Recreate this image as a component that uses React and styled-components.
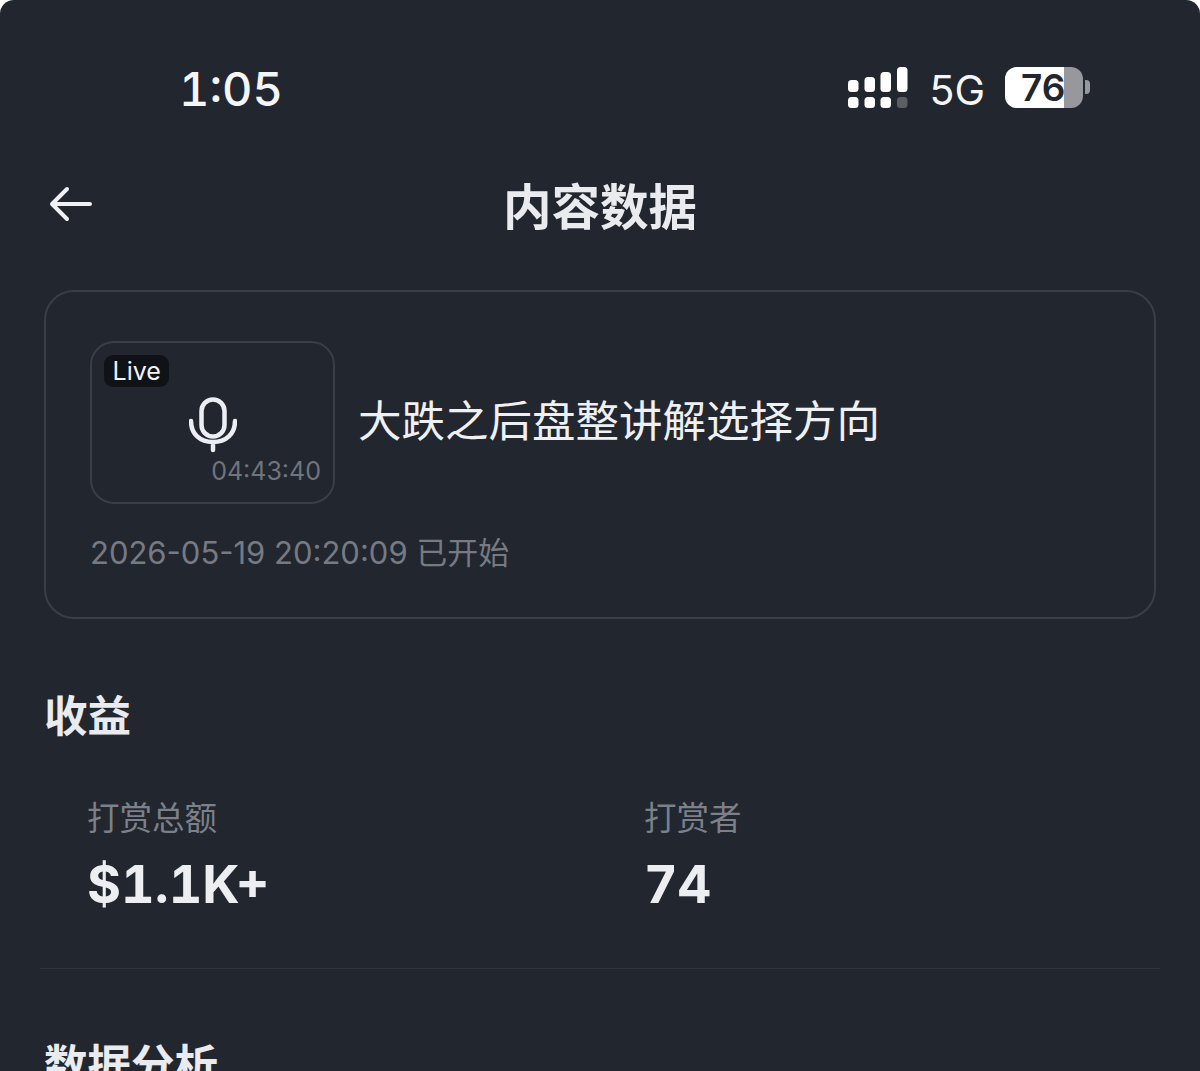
import React from "react";
import styled, { createGlobalStyle } from "styled-components";

const Global = createGlobalStyle`
  html, body { margin: 0; padding: 0; background: #ffffff; overflow: hidden; }
  * { box-sizing: border-box; }
`;

const Page = styled.div`
  width: 1200px;
  height: 1071px;
  overflow: hidden;
  background: #22262e;
  border-radius: 14px 14px 0 0;
  color: #eceef2;
  font-family: Inter, "Noto Sans CJK SC", sans-serif;
  display: flex;
  flex-direction: column;
`;

const StatusBar = styled.div`
  height: 174px;
  flex: none;
  padding: 62px 110px 0 179px;
  display: flex;
  justify-content: space-between;
  align-items: flex-start;
`;

const Clock = styled.div`
  font-size: 47px;
  line-height: 54px;
  font-weight: 500;
  font-variant-numeric: tabular-nums;
  color: #f4f5f7;
`;

const StatusIcons = styled.div`
  display: flex;
  align-items: center;
  height: 54px;
  margin-top: -2px;
`;

const Net = styled.span`
  font-size: 41px;
  line-height: 50px;
  font-weight: 400;
  margin: 5px 20px 0 21px;
  color: #f4f5f7;
`;

const Battery = styled.div`
  width: 78px;
  height: 41px;
  border-radius: 12px;
  background: #96989e;
`;

const BatteryFill = styled.div`
  height: 100%;
  background: #ffffff;
  border-radius: 12px 0 0 12px;
  color: #22262e;
  font-size: 37px;
  font-weight: 600;
  line-height: 41px;
  padding-left: 16px;
  white-space: nowrap;
`;

const BatteryCap = styled.div`
  width: 5px;
  height: 14px;
  margin-left: 2px;
  border-radius: 0 4px 4px 0;
  background: #96989e;
`;

const Header = styled.div`
  height: 60px;
  flex: none;
  position: relative;
  display: flex;
  align-items: center;
  justify-content: center;
  font-size: 48.5px;
  font-weight: 700;
  color: #e9ebef;
`;

const Back = styled.svg`
  position: absolute;
  left: 48px;
  top: 7px;
`;

const Body = styled.div`
  padding: 56px 44px 0;
  display: flex;
  flex-direction: column;
`;

const Card = styled.div`
  height: 329px;
  border: 2px solid #3a3e48;
  border-radius: 30px;
  padding: 49px 44px 0;
`;

const ItemRow = styled.div`
  display: flex;
  align-items: center;
  gap: 23px;
`;

const Thumb = styled.div`
  position: relative;
  width: 245px;
  height: 163px;
  flex: none;
  border: 2px solid #3a3e48;
  border-radius: 24px;
  display: flex;
  align-items: center;
  justify-content: center;
`;

const LiveTag = styled.span`
  position: absolute;
  left: 12px;
  top: 12px;
  height: 32px;
  padding: 0 8.5px;
  border-radius: 9px;
  background: #0f1216;
  color: #f3f4f6;
  font-size: 25px;
  line-height: 32px;
`;

const Duration = styled.span`
  position: absolute;
  right: 12px;
  bottom: 16px;
  color: #70747d;
  font-size: 25px;
  line-height: 30px;
`;

const MicIcon = styled.svg`
  margin-top: 5px;
`;

const Title = styled.div`
  font-size: 43.5px;
  line-height: 60px;
  margin-top: -4px;
  color: #eef0f3;
  white-space: nowrap;
`;

const Started = styled.div`
  margin-top: 27px;
  font-size: 31px;
  line-height: 44px;
  color: #767a83;
  white-space: nowrap;
`;

const SectionTitle = styled.h2`
  margin: ${(p) => p.$top}px 0 0;
  font-size: 43.5px;
  line-height: 60px;
  font-weight: 700;
  color: #e9ebef;
`;

const Stats = styled.div`
  display: grid;
  grid-template-columns: 557px 1fr;
  margin-top: 51px;
  padding-left: 43px;
`;

const Stat = styled.div`
  display: flex;
  flex-direction: column;
`;

const StatLabel = styled.div`
  font-size: 32.5px;
  line-height: 44px;
  color: #7c808a;
`;

const StatValue = styled.div`
  margin-top: 10px;
  font-size: 52px;
  line-height: 68px;
  font-weight: 700;
  font-variant-numeric: tabular-nums;
  color: #eceef2;
`;

const Divider = styled.div`
  height: 1px;
  margin: 49px -4px 0;
  background: #31353e;
`;

const Signal = () => (
  <svg width="60" height="41" viewBox="0 0 60 41">
    <g fill="#fff">
      <rect x="0" y="13" width="10.5" height="12" rx="3.5" />
      <rect x="16.5" y="10" width="10.5" height="15" rx="3.5" />
      <rect x="32.5" y="5" width="10.5" height="20" rx="3.5" />
      <rect x="49" y="0" width="10.5" height="25" rx="3.5" />
      <rect x="0" y="30" width="10.5" height="11" rx="3.5" />
      <rect x="16.5" y="30" width="10.5" height="11" rx="3.5" />
      <rect x="32.5" y="30" width="10.5" height="11" rx="3.5" />
    </g>
    <rect x="49" y="30" width="10.5" height="11" rx="3.5" fill="#5b5e63" />
  </svg>
);

export default function App() {
  return (
    <>
      <Global />
      <Page>
        <StatusBar>
          <Clock>1:05</Clock>
          <StatusIcons>
            <Signal />
            <Net>5G</Net>
            <Battery>
              <BatteryFill style={{ width: "76%" }}>76</BatteryFill>
            </Battery>
            <BatteryCap />
          </StatusIcons>
        </StatusBar>
        <Header>
          <Back width="46" height="46" viewBox="0 0 46 46" fill="none" stroke="#f0f1f4" strokeWidth="4" strokeLinecap="round" strokeLinejoin="round">
            <path d="M4 23H42M19 8L4 23L19 38" />
          </Back>
          内容数据
        </Header>
        <Body>
          <Card>
            <ItemRow>
              <Thumb>
                <LiveTag>Live</LiveTag>
                <MicIcon width="48" height="56" viewBox="0 0 48 56" fill="none" stroke="#eceef4" strokeWidth="4.5" strokeLinecap="round">
                  <rect x="12.5" y="2.5" width="23" height="37" rx="11.5" />
                  <path d="M2 24C2 37 11 45 24 45C37 45 46 37 46 24M24 45V53" />
                </MicIcon>
                <Duration>04:43:40</Duration>
              </Thumb>
              <Title>大跌之后盘整讲解选择方向</Title>
            </ItemRow>
            <Started>2026-05-19 20:20:09 已开始</Started>
          </Card>
          <SectionTitle $top={67}>收益</SectionTitle>
          <Stats>
            <Stat>
              <StatLabel>打赏总额</StatLabel>
              <StatValue>$1.1K+</StatValue>
            </Stat>
            <Stat>
              <StatLabel>打赏者</StatLabel>
              <StatValue>74</StatValue>
            </Stat>
          </Stats>
          <Divider />
          <SectionTitle $top={66}>数据分析</SectionTitle>
        </Body>
      </Page>
    </>
  );
}
